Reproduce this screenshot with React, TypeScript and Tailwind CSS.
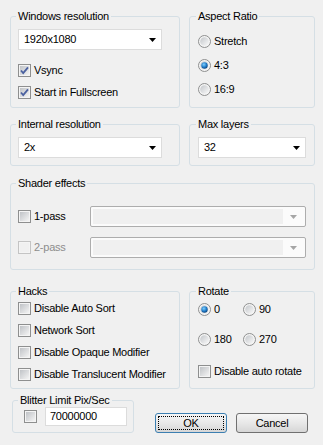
import type { ReactNode } from 'react'

function Group({ title, className, children }: { title: string; className: string; children: ReactNode }) {
  return (
    <fieldset className={`border border-[#d5dfe5] rounded-[3px] ${className}`}>
      <legend className="-ml-[2px] px-[2px] leading-[13px]">{title}</legend>
      {children}
    </fieldset>
  )
}

function CheckBox({ checked = false, disabled = false }: { checked?: boolean; disabled?: boolean }) {
  return (
    <svg width="13" height="13" viewBox="0 0 13 13" className="shrink-0">
      <defs>
        <linearGradient id="cbInner" x1="0" y1="0" x2="1" y2="1">
          <stop offset="0" stopColor="#aeb2b7" />
          <stop offset="1" stopColor="#f4f4f4" />
        </linearGradient>
      </defs>
      <rect x="0.5" y="0.5" width="12" height="12" fill="#f4f4f4" stroke={disabled ? '#c4c4c4' : '#8e8f8f'} />
      <rect x="2" y="2" width="9" height="9" fill={disabled ? '#f0f0f0' : 'url(#cbInner)'} opacity={disabled ? 1 : 0.75} />
      {checked && (
        <path d="M3 6.5 L5.2 9 L10 3.3" fill="none" stroke="#4b61a0" strokeWidth="1.8" />
      )}
    </svg>
  )
}

function Radio({ checked = false }: { checked?: boolean }) {
  return (
    <svg width="13" height="13" viewBox="0 0 13 13" className="shrink-0">
      <defs>
        <linearGradient id="rdInner" x1="0" y1="0" x2="1" y2="1">
          <stop offset="0" stopColor="#b7bbc0" />
          <stop offset="1" stopColor="#fbfbfb" />
        </linearGradient>
        <radialGradient id="rdDot" cx="0.4" cy="0.35" r="0.7">
          <stop offset="0" stopColor="#7fd0ff" />
          <stop offset="0.6" stopColor="#1e79c6" />
          <stop offset="1" stopColor="#0b3e75" />
        </radialGradient>
      </defs>
      <circle cx="6.5" cy="6.5" r="6" fill="#f4f4f4" stroke="#8e8f8f" />
      <circle cx="6.5" cy="6.5" r="4.3" fill="url(#rdInner)" opacity="0.8" />
      {checked && <circle cx="6.5" cy="6.5" r="3.2" fill="url(#rdDot)" />}
    </svg>
  )
}

function Arrow({ color = '#000' }: { color?: string }) {
  return (
    <svg width="7" height="4" viewBox="0 0 7 4">
      <path d="M0 0 H7 L3.5 4 Z" fill={color} />
    </svg>
  )
}

function Combo({ value, width }: { value: string; width: string }) {
  return (
    <div className={`${width} h-[21px] border border-[#dcdcdc] bg-white flex items-center pl-[5px] pr-[5px]`}>
      <span className="flex-1">{value}</span>
      <Arrow />
    </div>
  )
}

function DisabledCombo() {
  return (
    <div className="w-[216px] h-[21px] border border-[#adadad] bg-[#fbfbfb] rounded-[2px] flex items-center p-[2px]">
      <div className="flex-1 h-full bg-[#f0f0f0]" />
      <div className="w-[20px] flex justify-center">
        <Arrow color="#a6a6a6" />
      </div>
    </div>
  )
}

function CheckRow({ label, checked, disabled }: { label: string; checked?: boolean; disabled?: boolean }) {
  return (
    <div className="flex items-center gap-[3px] h-[13px]">
      <CheckBox checked={checked} disabled={disabled} />
      <span className={disabled ? 'text-[#8d8d8d]' : ''}>{label}</span>
    </div>
  )
}

function RadioRow({ label, checked, className = '' }: { label: string; checked?: boolean; className?: string }) {
  return (
    <div className={`flex items-center gap-[3px] h-[13px] ${className}`}>
      <Radio checked={checked} />
      <span>{label}</span>
    </div>
  )
}

export default function App() {
  return (
    <div className="w-[323px] h-[445px] bg-[#f0f0f0] pl-[10px] pt-[10px] text-[11px] leading-[13px] tracking-[-0.25px] whitespace-nowrap text-black font-['Liberation_Sans',Arial,sans-serif] overflow-hidden">
      <div className="flex gap-[9px]">
        <Group title="Windows resolution" className="w-[170px] h-[98px] px-[7px]">
          <div className="pt-[6px]">
            <Combo value="1920x1080" width="w-[144px]" />
            <div className="mt-[14px]">
              <CheckRow label="Vsync" checked />
            </div>
            <div className="mt-[9px]">
              <CheckRow label="Start in Fullscreen" checked />
            </div>
          </div>
        </Group>
        <Group title="Aspect Ratio" className="w-[126px] h-[98px] px-[8px]">
          <div className="pt-[12px] flex flex-col gap-[11px]">
            <RadioRow label="Stretch" />
            <RadioRow label="4:3" checked />
            <RadioRow label="16:9" />
          </div>
        </Group>
      </div>

      <div className="flex gap-[9px] mt-[10px]">
        <Group title="Internal resolution" className="w-[170px] h-[48px] px-[7px]">
          <div className="pt-[6px]">
            <Combo value="2x" width="w-[144px]" />
          </div>
        </Group>
        <Group title="Max layers" className="w-[126px] h-[48px] px-[8px]">
          <div className="pt-[6px]">
            <Combo value="32" width="w-[108px]" />
          </div>
        </Group>
      </div>

      <Group title="Shader effects" className="w-[305px] h-[93px] mt-[11px] px-[7px]">
        <div className="pt-[16px] flex flex-col gap-[10px]">
          <div className="flex items-center">
            <div className="w-[72px]">
              <CheckRow label="1-pass" />
            </div>
            <DisabledCombo />
          </div>
          <div className="flex items-center">
            <div className="w-[72px]">
              <CheckRow label="2-pass" disabled />
            </div>
            <DisabledCombo />
          </div>
        </div>
      </Group>

      <div className="flex gap-[9px] mt-[15px]">
        <Group title="Hacks" className="w-[170px] h-[104px] px-[7px]">
          <div className="pt-[4px] flex flex-col gap-[9px]">
            <CheckRow label="Disable Auto Sort" />
            <CheckRow label="Network Sort" />
            <CheckRow label="Disable Opaque Modifier" />
            <CheckRow label="Disable Translucent Modifier" />
          </div>
        </Group>
        <Group title="Rotate" className="w-[126px] h-[104px] px-[8px]">
          <div className="pt-[5px]">
            <div className="grid grid-cols-[45px_1fr] gap-y-[17px]">
              <RadioRow label="0" checked />
              <RadioRow label="90" />
              <RadioRow label="180" />
              <RadioRow label="270" />
            </div>
            <div className="mt-[19px]">
              <CheckRow label="Disable auto rotate" />
            </div>
          </div>
        </Group>
      </div>

      <div className="flex mt-[5px]">
        <Group title="Blitter Limit Pix/Sec" className="ml-[2px] w-[122px] h-[39px] pl-[7px]">
          <div className="flex items-center pl-[4px]">
            <CheckBox />
            <div className="ml-[8px] w-[82px] h-[19px] border border-[#dcdcdc] bg-white pl-[4px] flex items-center">
              70000000
            </div>
          </div>
        </Group>
        <button className="ml-[21px] mt-[19px] w-[72px] h-[20px] rounded-[3px] border border-[#3c7fb1] bg-gradient-to-b from-[#f6f6f6] via-[#e8e8e8] to-[#d6d6d6] p-[2px]">
          <div className="w-full h-full border border-dotted border-black flex items-center justify-center leading-[13px]">
            OK
          </div>
        </button>
        <button className="ml-[9px] mt-[19px] w-[72px] h-[20px] rounded-[3px] border border-[#707070] bg-gradient-to-b from-[#f6f6f6] via-[#e8e8e8] to-[#d6d6d6] flex items-center justify-center leading-[13px]">
          Cancel
        </button>
      </div>
    </div>
  )
}
